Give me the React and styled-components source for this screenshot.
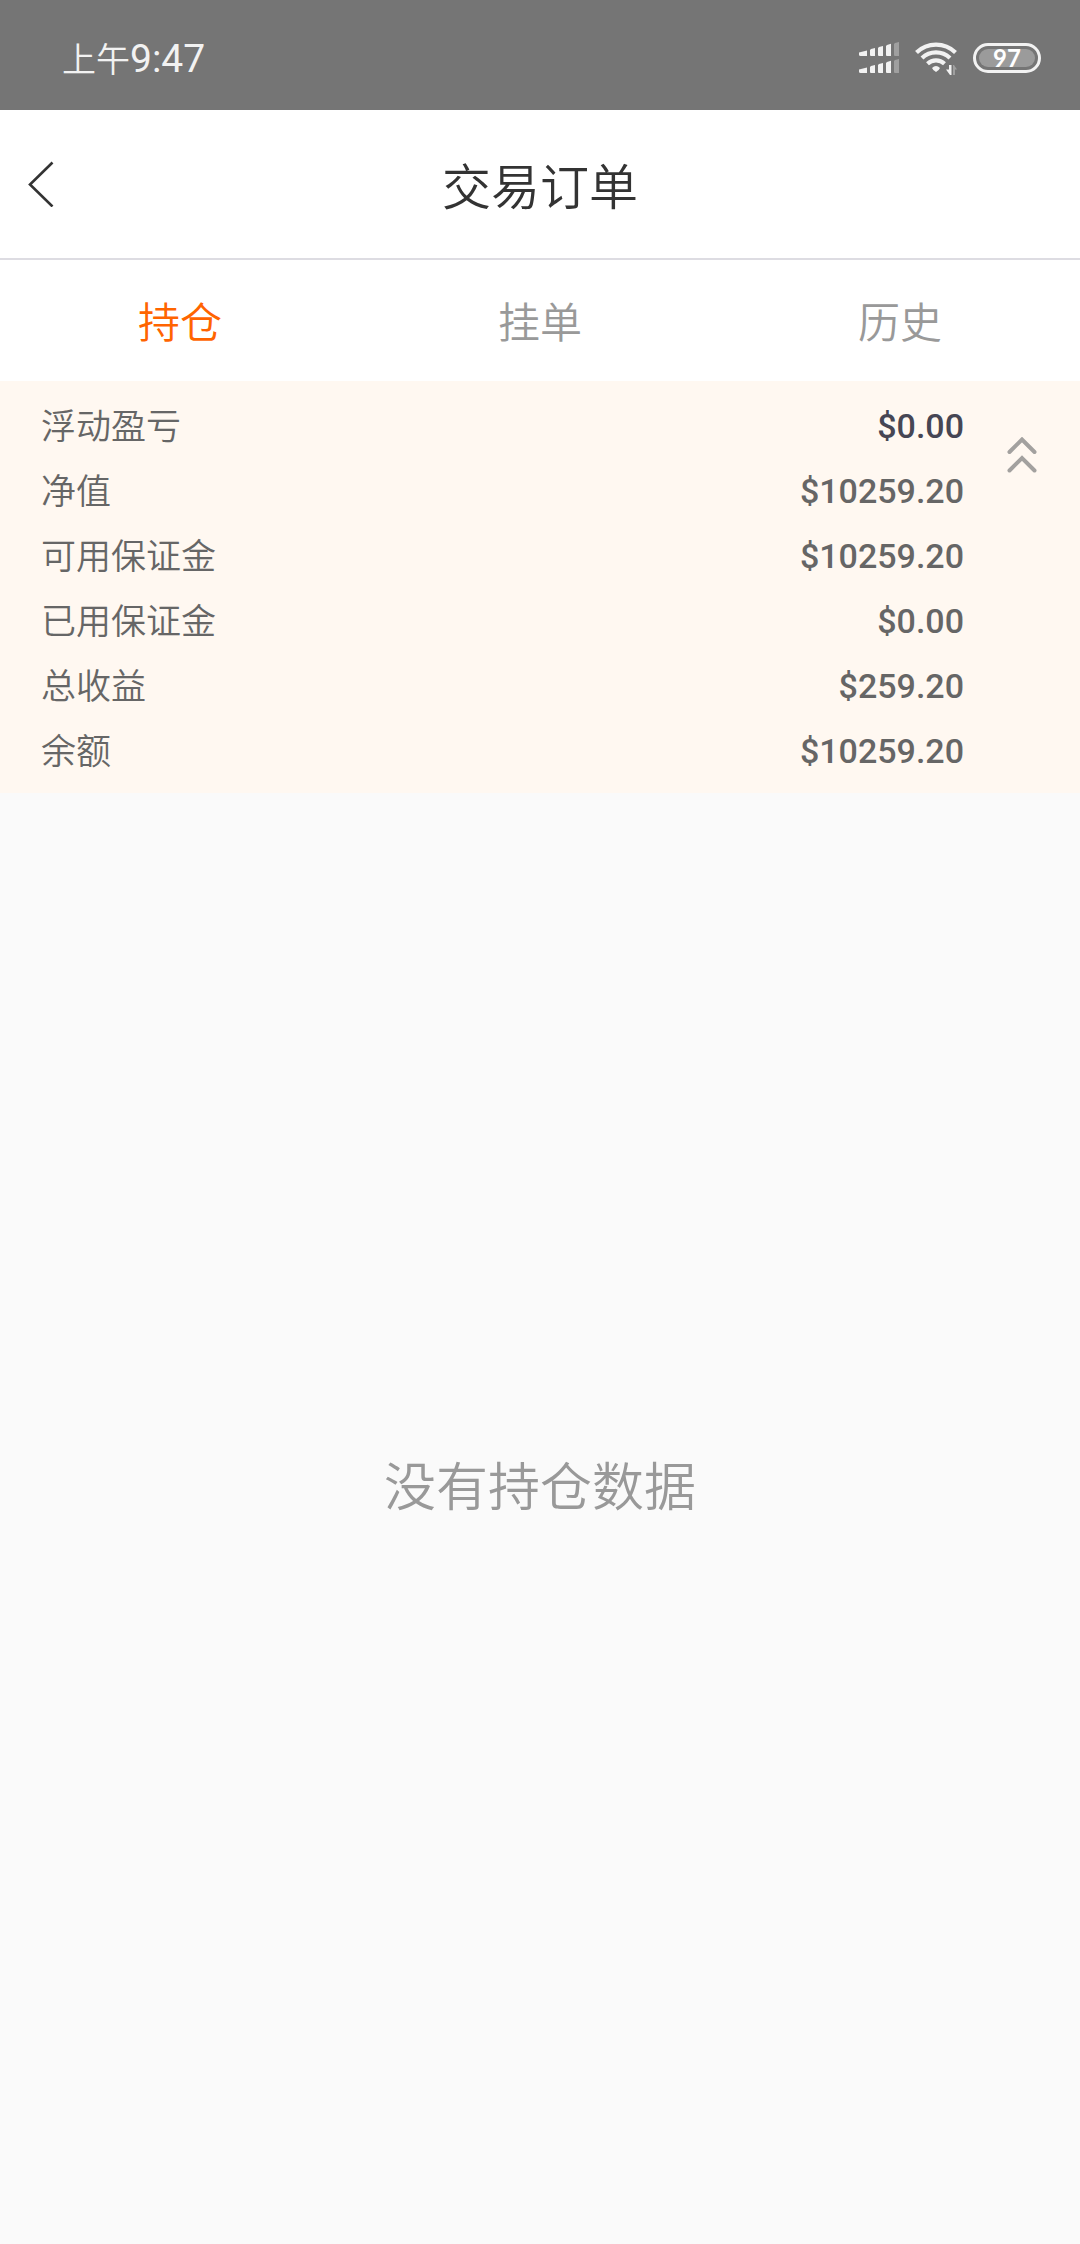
import { useState } from "react";
import styled, { createGlobalStyle } from "styled-components";

const GlobalStyle = createGlobalStyle`
  * {
    box-sizing: border-box;
  }

  body {
    margin: 0;
    background-color: #fafafa;
    font-family: "Noto Sans CJK SC", sans-serif;
    font-weight: 350;
  }

  button {
    padding: 0;
    border: 0;
    background: none;
    font: inherit;
    cursor: pointer;
  }
`;

const Page = styled.div`
  display: flex;
  flex-direction: column;
  min-height: 100vh;
`;

const StatusBar = styled.div`
  display: flex;
  align-items: center;
  justify-content: space-between;
  height: 110px;
  padding: 6px 39px 0 62px;
  background-color: #757575;
  color: #f2f2f2;
`;

const Clock = styled.div`
  font-size: 34px;
  line-height: 48px;
`;

const ClockTime = styled.span`
  font-family: Roboto, sans-serif;
  font-size: 39px;
  font-weight: 400;
`;

const StatusIcons = styled.div`
  display: flex;
  align-items: center;
  gap: 16px;

  svg {
    display: block;
  }
`;

const Battery = styled.div`
  width: 68px;
  height: 30px;
  padding: 3px;
  border: 3px solid #f2f2f2;
  border-radius: 15px;
`;

const BatteryLevel = styled.div`
  height: 18px;
  border-radius: 9px;
  background-color: #9b9b9b;
  color: #ffffff;
  font-family: Lato, sans-serif;
  font-size: 24px;
  font-weight: 700;
  line-height: 18px;
  text-align: center;
`;

const Header = styled.header`
  display: grid;
  grid-template-columns: 100px 1fr 100px;
  align-items: center;
  height: 150px;
  border-bottom: 2px solid #dddce2;
  background-color: #ffffff;
`;

const BackButton = styled.button`
  display: flex;
  align-items: center;
  height: 100px;
  padding-left: 28px;
`;

const Title = styled.h1`
  margin: 0;
  color: #333333;
  font-size: 49px;
  font-weight: 350;
  line-height: 72px;
  text-align: center;
`;

const Tabs = styled.div`
  display: grid;
  grid-template-columns: repeat(3, 1fr);
  height: 121px;
  background-color: #ffffff;
`;

const Tab = styled.button`
  && {
    padding-bottom: 2px;
    color: ${(props) => (props.$active ? "#ff6400" : "#999999")};
    font-size: 42px;
    line-height: 60px;
  }
`;

const Summary = styled.section`
  display: grid;
  grid-template-columns: 1fr 116px;
  align-items: start;
  padding: 12px 0 10px;
  background-color: #fff8f1;
`;

const SummaryList = styled.dl`
  margin: 0;
  padding-left: 41px;
`;

const SummaryRow = styled.div`
  display: flex;
  align-items: center;
  justify-content: space-between;
  height: 65px;
`;

const Label = styled.dt`
  padding-bottom: 3px;
  color: #666666;
  font-size: 35px;
  line-height: 52px;
`;

const Value = styled.dd`
  margin: 0;
  color: ${(props) => (props.$strong ? "#464654" : "#666666")};
  font-family: Roboto, sans-serif;
  font-size: 34px;
  font-weight: 500;
  line-height: 52px;
`;

const ToggleButton = styled.button`
  display: flex;
  align-items: center;
  justify-content: center;
  height: 124px;
`;

const Empty = styled.main`
  display: flex;
  flex: 1;
  align-items: center;
  justify-content: center;
  padding-bottom: 70px;
  color: #999999;
  font-size: 52px;
  line-height: 72px;
`;

const SignalIcon = () => (
  <svg width="40" height="32" viewBox="0 0 40 32" fill="#f2f2f2">
    {[0, 17].map((y) => (
      <g key={y} transform={`translate(0 ${y})`}>
        <path d="M0 10.5 8 8.500V14H1.500Q0 14 0 12.500Z" />
        <path d="M11 8 12 7 16 6V14H12Q11 14 11 13Z" />
        <path d="M19 6 20 5 24 4V14H20Q19 14 19 13Z" />
        <path d="M27 4 28 3 32 1.800V14H28Q27 14 27 13Z" />
        <path d="M35 2 36 1 40 0V14H36Q35 14 35 13Z" fill="#9f9f9f" />
      </g>
    ))}
  </svg>
);

const WifiIcon = () => (
  <svg width="42" height="34" viewBox="0 0 42 34" fill="none">
    <g stroke="#f2f2f2" strokeWidth="4.200">
      <path d="M1.500 11.500A28 28 0 0 1 40.500 11.500" />
      <path d="M7 17A20.500 20.500 0 0 1 35 17" />
      <path d="M12.500 22.800A12.500 12.500 0 0 1 29.500 22.800" />
    </g>
    <path d="M17 27Q21 23 25 27Q24 29.500 21 31Q18 29.500 17 27Z" fill="#f2f2f2" />
    <path d="M34 24H36.500V34H35L31 28.500H34Z" fill="#f2f2f2" />
    <path d="M38 34V24H39L42 28.500H40V34Z" fill="#9f9f9f" />
  </svg>
);

const BackIcon = () => (
  <svg width="26" height="46" viewBox="0 0 26 46" fill="none">
    <path d="M24.500 1.500 2 23.500 24.500 45.500" stroke="#333333" strokeWidth="2.600" />
  </svg>
);

const DoubleChevron = ({ flipped }) => (
  <svg
    width="30"
    height="36"
    viewBox="0 0 30 36"
    fill="none"
    stroke="#a3a19f"
    strokeWidth="4"
    strokeLinecap="round"
    transform={flipped ? "rotate(180)" : undefined}
  >
    <path d="M2.500 15 15 2.500 27.500 15" />
    <path d="M2.500 33.500 15 21 27.500 33.500" />
  </svg>
);

const tabs = ["持仓", "挂单", "历史"];

const account = [
  { label: "浮动盈亏", value: "$0.00", strong: true },
  { label: "净值", value: "$10259.20" },
  { label: "可用保证金", value: "$10259.20" },
  { label: "已用保证金", value: "$0.00" },
  { label: "总收益", value: "$259.20" },
  { label: "余额", value: "$10259.20" },
];

const App = () => {
  const [activeTab, setActiveTab] = useState("持仓");
  const [expanded, setExpanded] = useState(true);

  const rows = expanded ? account : account.slice(0, 2);

  return (
    <Page>
      <GlobalStyle />
      <StatusBar>
        <Clock>
          上午<ClockTime>9:47</ClockTime>
        </Clock>
        <StatusIcons>
          <SignalIcon />
          <WifiIcon />
          <Battery>
            <BatteryLevel>97</BatteryLevel>
          </Battery>
        </StatusIcons>
      </StatusBar>
      <Header>
        <BackButton type="button" aria-label="返回">
          <BackIcon />
        </BackButton>
        <Title>交易订单</Title>
      </Header>
      <Tabs role="tablist">
        {tabs.map((tab) => (
          <Tab
            key={tab}
            type="button"
            role="tab"
            aria-selected={tab === activeTab}
            $active={tab === activeTab}
            onClick={() => setActiveTab(tab)}
          >
            {tab}
          </Tab>
        ))}
      </Tabs>
      <Summary>
        <SummaryList>
          {rows.map(({ label, value, strong }) => (
            <SummaryRow key={label}>
              <Label>{label}</Label>
              <Value $strong={strong}>{value}</Value>
            </SummaryRow>
          ))}
        </SummaryList>
        <ToggleButton
          type="button"
          aria-label="展开或收起"
          aria-expanded={expanded}
          onClick={() => setExpanded(!expanded)}
        >
          <DoubleChevron flipped={!expanded} />
        </ToggleButton>
      </Summary>
      <Empty>没有{activeTab}数据</Empty>
    </Page>
  );
};

export default App;
